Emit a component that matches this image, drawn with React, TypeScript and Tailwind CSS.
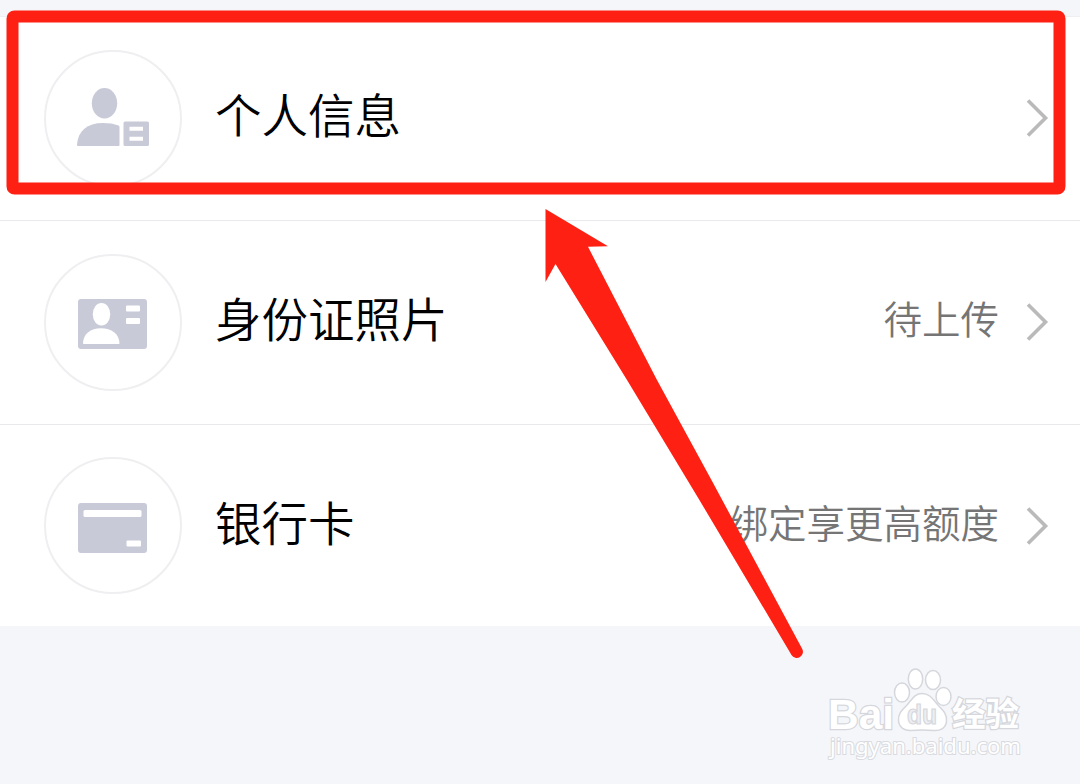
import React from "react";

const ICON_COLOR = "#c9cad8";

const ProfileIcon = () => (
  <svg
    className="mb-1"
    width="72"
    height="60"
    viewBox="0 0 72 60"
    fill={ICON_COLOR}
  >
    <ellipse cx="27.500" cy="15.300" rx="12.700" ry="15.300" />
    <path d="M0 56.500C1 43 10 35 26 35c6 0 11 .8 15.500 2.500.7.300 1 .8 1 1.500v18c0 .6-.4 1-1 1H1.200C.5 58 0 57.500 0 56.500Z" />
    <path
      fillRule="evenodd"
      d="M48 33.500h22.500a1.500 1.500 0 0 1 1.500 1.500v21.500a1.500 1.500 0 0 1-1.500 1.500H48a1.500 1.500 0 0 1-1.500-1.500V35a1.500 1.500 0 0 1 1.500-1.500ZM52.500 38.700v4H66v-4ZM52.500 48.700v4H66v-4Z"
    />
  </svg>
);

const IdCardIcon = () => (
  <svg width="70" height="50" viewBox="0 0 70 50">
    <rect width="69" height="50" rx="3" fill={ICON_COLOR} />
    <g fill="#fff">
      <ellipse cx="23.500" cy="15.300" rx="8.700" ry="11.300" />
      <path d="M5 44C5.500 35 12.500 29.300 23 29.300S41 35 41.500 44c0 .6-.4 1-1 1H6c-.6 0-1-.4-1-1Z" />
      <rect x="48" y="6.500" width="14" height="6" rx="1" />
      <rect x="48" y="19" width="14" height="6" rx="1" />
    </g>
  </svg>
);

const BankCardIcon = () => (
  <svg width="70" height="50" viewBox="0 0 70 50">
    <rect width="69" height="50" rx="3" fill={ICON_COLOR} />
    <g fill="#fff">
      <rect x="5.500" y="7" width="58" height="7" rx="1.500" />
      <rect x="48.500" y="37.500" width="14.500" height="6" rx="1" />
    </g>
  </svg>
);

const Chevron = () => (
  <svg width="24" height="40" viewBox="0 0 24 40" fill="none">
    <path d="M3 2.500 20.500 20 3 37.500" stroke="#bababa" strokeWidth="3.600" />
  </svg>
);

interface RowProps {
  icon: React.ReactNode;
  title: string;
  hint?: string;
}

const Row = ({ icon, title, hint }: RowProps) => (
  <div className="flex h-[204px] items-center border-b border-[#e9e9eb] pb-px pl-11 pr-[31px] last:h-[201px] last:border-b-0 last:pb-0">
    <div className="flex h-[137px] w-[138px] shrink-0 items-center justify-center rounded-full border-2 border-[#efeff1] pt-1">
      {icon}
    </div>
    <span className="-mt-[9px] ml-[33px] text-[46.5px] leading-none font-[350] text-black">
      {title}
    </span>
    <span className="-mt-[9px] mr-[26px] ml-auto text-[38.5px] leading-none font-[350] text-[#757575]">
      {hint}
    </span>
    <Chevron />
  </div>
);

// Red frame and arrow pointing at the first row
const Highlight = () => (
  <svg
    className="absolute inset-0"
    width="1080"
    height="784"
    viewBox="0 0 1080 784"
  >
    <rect
      x="12.500"
      y="16.500"
      width="1047"
      height="172"
      rx="2"
      fill="none"
      stroke="#fe2113"
      strokeWidth="12"
    />
    <path
      fill="#fe2113"
      d="M545.500 209 608 246.300 588 246.800 657 380 712 481 802 648.500A6 6 0 0 1 791.500 655L700 501 627 380 555.500 264 545.500 282Z"
    />
  </svg>
);

const Watermark = () => (
  <svg
    className="absolute left-[820px] top-[660px]"
    width="220"
    height="110"
    viewBox="0 0 220 110"
    fill="#fff"
    stroke="#d5d7dc"
    strokeWidth="1.500"
  >
    <g paintOrder="stroke" strokeWidth="2.500">
      <text
        x="8"
        y="68.500"
        fontSize="43"
        fontWeight="700"
        fontFamily="Liberation Sans, sans-serif"
        textLength="66"
        lengthAdjust="spacingAndGlyphs"
      >
        Bai
      </text>
      <text
        x="132"
        y="66"
        fontSize="33"
        fontWeight="700"
        fontFamily="Noto Sans CJK SC, sans-serif"
        textLength="67"
        lengthAdjust="spacingAndGlyphs"
      >
        经验
      </text>
      <text
        x="10"
        y="94"
        fontSize="21"
        strokeWidth="2"
        stroke="#d9dbe0"
        fontFamily="Noto Sans, sans-serif"
        textLength="191"
        lengthAdjust="spacingAndGlyphs"
      >
        jingyan.baidu.com
      </text>
    </g>
    <ellipse cx="82" cy="32.500" rx="7.500" ry="9.500" />
    <ellipse cx="95.500" cy="19" rx="7.200" ry="10" />
    <ellipse cx="113" cy="20" rx="7.500" ry="9.500" />
    <ellipse cx="123.500" cy="36.500" rx="7.500" ry="9" />
    <path d="M102 33.500c8 0 11 6 16 11.500 4 4.500 9 8 8.500 16-.5 7-6 10-13 9.500-8-.7-15-.7-22 0-7 .5-12.500-3-13-10-.5-8 5-11.500 9-16 4.500-5 7-11 14.500-11Z" />
    <text
      x="87"
      y="64"
      fontSize="27"
      fontWeight="700"
      fontFamily="Liberation Sans, sans-serif"
      fill="#eceef2"
      strokeWidth="1.200"
      textLength="30"
      lengthAdjust="spacingAndGlyphs"
    >
      du
    </text>
  </svg>
);

export default function App() {
  return (
    <div className="relative h-[784px] w-[1080px] overflow-hidden bg-[#f5f6fa] pt-[17px] font-['Noto_Sans_CJK_SC',sans-serif]">
      <div className="bg-white shadow-[0_-1px_0_#eeeff2]">
        <Row icon={<ProfileIcon />} title="个人信息" />
        <Row icon={<IdCardIcon />} title="身份证照片" hint="待上传" />
        <Row icon={<BankCardIcon />} title="银行卡" hint="绑定享更高额度" />
      </div>
      <Highlight />
      <Watermark />
    </div>
  );
}
